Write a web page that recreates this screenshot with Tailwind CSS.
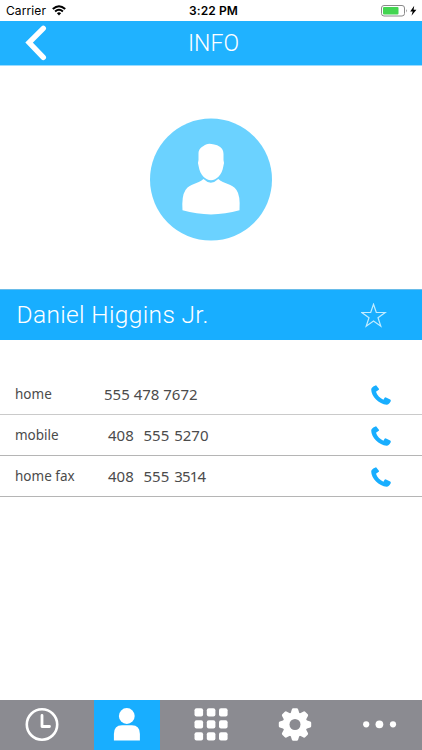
<!DOCTYPE html>
<html lang="en">
<head>
<meta charset="utf-8">
<meta name="viewport" content="width=device-width, initial-scale=1">
<title>Info</title>
<script src="https://cdn.jsdelivr.net/npm/@tailwindcss/browser@4"></script>
</head>
<body class="bg-white">
<svg class="hidden">
  <symbol id="phone" viewBox="0 0 20 20"><path d="M4 .7Q5.2 -.1 5.7 .9L7.9 3.7Q8.3 4.6 7.4 5.1L5 6.8C6 10 9 13.4 12.4 14.8L13.6 12.8Q14.2 12 15 12.4L19.2 14.6Q20.2 15.4 19.6 16.4C18.6 18.3 17.4 19.7 15.6 19.7C8 19.3 .2 11.2 .2 4.5C.2 2.6 2.3 1.4 4 .7Z" fill="#18aeff"/></symbol>
</svg>
<div class="w-[422px] h-[750px] flex flex-col overflow-hidden bg-white font-['Roboto',sans-serif]">
  <div class="h-[21px] shrink-0 grid grid-cols-3 items-center text-[12px] leading-[21px] text-black font-['Inter',sans-serif]">
    <div class="flex items-center gap-[6px] pl-[6px]">
      <span class="tracking-[0.1px]">Carrier</span>
      <svg class="w-[14px] h-[11px]" viewBox="0 0 14 11" fill="none" stroke="#000" stroke-width="2"><path d="M.8 4.1Q7-1.7 13.2 4.1M3.1 6.5Q7 3 10.9 6.5"/><path d="M4.9 8.2Q7 6.5 9.1 8.2L7 10.4Z" fill="#000" stroke="none"/></svg>
    </div>
    <div class="text-center font-semibold pl-[5px] tracking-[0.1px]">3:22 PM</div>
    <div class="flex justify-end pr-[4px]">
      <svg class="w-[38px] h-[12px]" viewBox="0 0 38 12"><rect x="1.5" y=".5" width="23" height="10.5" rx="2.5" fill="#fff" stroke="#8a8a8a"/><rect x="3" y="2" width="15.5" height="7.5" rx="1" fill="#43d551"/><path d="M26 4Q27.8 5.7 26 7.5Z" fill="#8a8a8a"/><path d="M34.2 .7L30.2 6.4H32.7L31.5 10.7L36.4 4.8H33.6Z" fill="#000"/></svg>
    </div>
  </div>
  <header class="h-[45px] shrink-0 bg-[#20b2ff] border-b border-[#9bdcff] grid grid-cols-3 items-start text-white">
    <svg class="w-[22px] h-[36px] ml-[25px] mt-[4px]" viewBox="0 0 22 36" fill="none" stroke="#fff" stroke-width="5.4" stroke-linecap="round" stroke-linejoin="miter"><path d="M18.3 3.3L4.1 17.6L18.3 32.4"/></svg>
    <h1 class="text-center text-[23px] leading-[44px] font-light pl-[5px] pt-px">INFO</h1>
  </header>
  <div class="h-[223px] shrink-0 flex justify-center pt-[52px]">
    <svg class="w-[124px] h-[124px]" viewBox="0 0 124 124"><circle cx="62" cy="61.6" r="61" fill="#6bd2ff"/><path d="M49.5 42V35.5C49.5 30.5 53 28.6 57 26.4Q60 25.2 64 26.2C70 27.4 74.5 29.5 74.5 36V42Q75.6 44.5 74.3 48.5C73 57 67.5 62.2 62 62.2S51 57 49.7 48.5Q48.4 44.5 49.5 42ZM54.5 61Q61.8 68.3 69.3 61C75 66 83 65.5 87.5 72Q91.5 77.5 90.5 92.3Q62 100.5 33.5 92.3Q32.5 78 36.5 72C41 65.5 48.5 66 54.5 61Z" fill="#fff"/></svg>
  </div>
  <div class="h-[51px] shrink-0 bg-[#18aeff] border-t border-[#69bce9] flex items-center justify-between pl-[16.5px] pr-[35px] text-white">
    <h2 class="text-[24.5px] leading-[50px] font-light tracking-[0.35px]">Daniel Higgins Jr.</h2>
    <svg class="w-[26px] h-[25px] mt-[1px]" viewBox="0 0 26 25" fill="none" stroke="#c2ecff" stroke-width="1.2"><path d="M12.5 1.3L15.3 9.5H24.2L17 14.8L19.8 23.2L12.5 18L5.2 23.2L8 14.8L.8 9.5H9.7Z"/></svg>
  </div>
  <main class="flex-1 pt-[34px] text-[#4b4b4b] font-['Noto_Sans',sans-serif] text-[15px]">
    <div class="h-[41px] border-b border-[#cacaca] flex items-center pl-[15px] pr-[31px]">
      <span class="w-[89px] text-[13.5px] pt-px">home</span><span class="flex-1 whitespace-pre">555 478 7672</span>
      <svg class="w-[20px] h-[20px] mt-[2px]"><use href="#phone"/></svg>
    </div>
    <div class="h-[41px] border-b border-[#b5b5b5] flex items-center pl-[15px] pr-[31px]">
      <span class="w-[93px] text-[13.5px] pt-px">mobile</span><span class="flex-1 whitespace-pre [word-spacing:1px]">408  555 5270</span>
      <svg class="w-[20px] h-[20px] mt-[2px]"><use href="#phone"/></svg>
    </div>
    <div class="h-[41px] border-b border-[#b5b5b5] flex items-center pl-[15px] pr-[31px]">
      <span class="w-[93px] text-[13.5px] pt-px">home fax</span><span class="flex-1 whitespace-pre [word-spacing:1px]">408  555 <span class="tracking-[-0.8px]">3514</span></span>
      <svg class="w-[20px] h-[20px] mt-[2px]"><use href="#phone"/></svg>
    </div>
  </main>
  <nav class="h-[50px] shrink-0 bg-[#8b8b91] grid grid-cols-5 justify-items-center items-center">
    <svg class="w-[34px] h-[34px]" viewBox="0 0 34 34" fill="none" stroke="#fff"><circle cx="17" cy="16.5" r="15.2" stroke-width="2.6"/><path d="M17 7.5V18.5H24.5" stroke-width="2.8" stroke-linecap="round" stroke-linejoin="round"/></svg>
    <div class="w-[66px] h-full bg-[#18aeff] flex items-center justify-center"><svg class="w-[28px] h-[34px]" viewBox="0 0 28 34" fill="#fff"><circle cx="13.8" cy="8" r="7.9"/><path d="M.9 32.5V26Q.9 17.2 9 17.2H18.8Q26.9 17.2 26.9 26V32.5Z"/></svg></div>
    <svg class="w-[34px] h-[34px]" viewBox="0 0 34 34" fill="#fff"><rect x=".5" y=".3" width="8.6" height="8.2" rx="2"/><rect x="12.8" y=".3" width="8.6" height="8.2" rx="2"/><rect x="25" y=".3" width="8.6" height="8.2" rx="2"/><rect x=".5" y="12.3" width="8.6" height="8.2" rx="2"/><rect x="12.8" y="12.3" width="8.6" height="8.2" rx="2"/><rect x="25" y="12.3" width="8.6" height="8.2" rx="2"/><rect x=".5" y="24.3" width="8.6" height="8.2" rx="2"/><rect x="12.8" y="24.3" width="8.6" height="8.2" rx="2"/><rect x="25" y="24.3" width="8.6" height="8.2" rx="2"/></svg>
    <svg class="w-[34px] h-[34px]" viewBox="-17 -16.5 34 34"><g fill="#fff"><circle r="12.3"/><g id="teeth"><path id="tooth" d="M-4.6-10.5L-3.1-15.2Q-2.8-16.2-1.8-16.2H1.8Q2.8-16.2 3.1-15.2L4.6-10.5Z"/><use href="#tooth" transform="rotate(45)"/><use href="#tooth" transform="rotate(90)"/><use href="#tooth" transform="rotate(135)"/></g><use href="#teeth" transform="rotate(180)"/></g><circle r="5.5" fill="#8b8b91"/></svg>
    <svg class="w-[34px] h-[10px]" viewBox="0 0 34 10" fill="#fff"><circle cx="3.2" cy="4.3" r="3.1"/><circle cx="16.4" cy="4.3" r="3.9"/><circle cx="30" cy="4.3" r="3.1"/></svg>
  </nav>
</div>
</body>
</html>
